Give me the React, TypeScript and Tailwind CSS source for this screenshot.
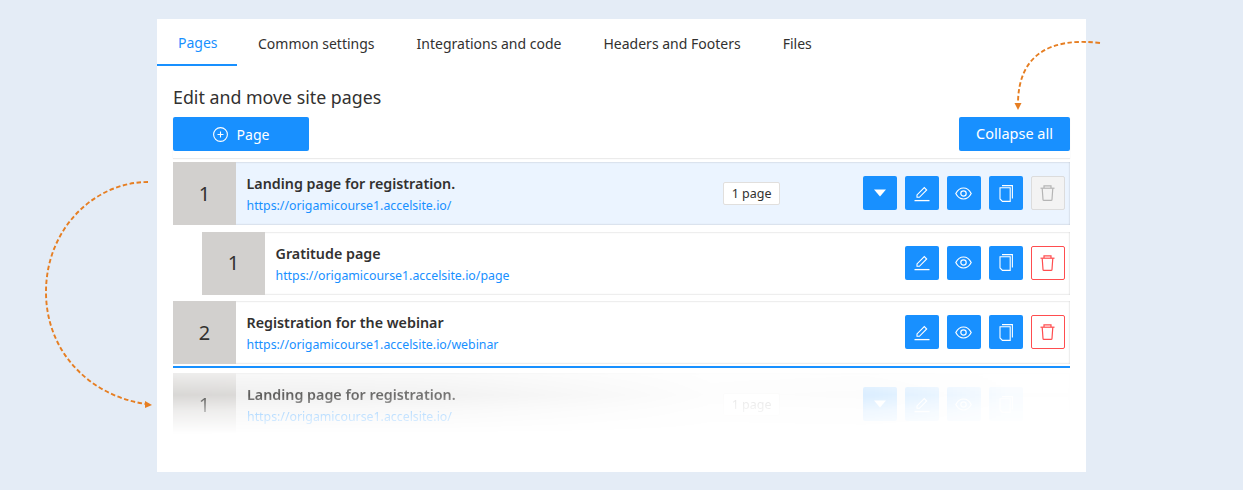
import type { ReactNode } from 'react';

type PageRow = {
  num: number;
  title: string;
  url: string;
  nested?: boolean;
  active?: boolean;
  ghost?: boolean;
};

const tabs = ['Pages', 'Common settings', 'Integrations and code', 'Headers and Footers', 'Files'];

const IconBtn = ({ children, className }: { children: ReactNode; className?: string }) => (
  <button className={`flex h-[34px] w-[33.5px] items-center justify-center rounded-[2px] ${className ?? 'bg-[#1890ff] text-white'}`}>
    {children}
  </button>
);

const CaretIcon = () => (
  <svg width="12" height="8" viewBox="0 0 12 8" fill="currentColor">
    <path d="M0 .5h12L6 7.500z" />
  </svg>
);

const EditIcon = () => (
  <svg width="16" height="17" viewBox="0 0 16 17" fill="none" stroke="currentColor" strokeWidth="1.100">
    <path d="M3 12.300v-2.400L10.300 2.600l2.400 2.400-7.300 7.300z" />
    <path d="M0.500 15.600h15" strokeWidth="1.300" />
  </svg>
);

const EyeIcon = () => (
  <svg width="17" height="13" viewBox="0 0 17 13" fill="none" stroke="currentColor" strokeWidth="1.200">
    <path d="M.8 6.500C2.600 3 5.300 1 8.500 1s5.900 2 7.700 5.500C14.400 10 11.700 12 8.500 12S2.600 10 .8 6.500z" />
    <circle cx="8.500" cy="6.500" r="2.700" />
  </svg>
);

const CopyIcon = () => (
  <svg width="14" height="17" viewBox="0 0 14 17" fill="none" stroke="currentColor" strokeWidth="1.100">
    <path d="M3 .6h10.400v12.800" />
    <path d="M1 2.800h10.200v13.600H3.400L1 14z" />
  </svg>
);

const TrashIcon = () => (
  <svg width="15" height="16" viewBox="0 0 15 16" fill="none" stroke="currentColor" strokeWidth="1.200">
    <path d="M.5 3.200h14" />
    <path d="M4 3V.8h7V3" />
    <path d="M2.200 3.200l.8 11.200c0 .6.400 1 1 1h7c.6 0 1-.4 1-1l.8-11.200" />
  </svg>
);

const rowBg = (row: PageRow) => {
  if (row.ghost) return 'bg-[#ededed]';
  return row.active ? 'bg-[#ebf4ff]' : 'bg-white';
};

const Row = ({ row }: { row: PageRow }) => (
  <div
    className={`flex h-[63px] items-stretch shadow-[inset_0_0_2px_rgba(0,0,0,0.25)] ${row.nested ? 'ml-[29px]' : ''} ${rowBg(row)}`}
  >
    <div className="flex w-[63px] shrink-0 items-center justify-center bg-[#d2d0ce] text-[20px] text-[#323130]">
      {row.num}
    </div>
    <div className={`flex min-w-0 flex-1 flex-col pt-[12px] ${row.ghost ? 'pl-[11px]' : 'pl-[10.5px]'}`}>
      <div className="text-[14.3px] leading-[20px] font-semibold text-[#323130]">{row.title}</div>
      <div className="mt-[3px] text-[12.35px] leading-[18px] text-[#1890ff]">{row.url}</div>
    </div>
    {row.active && (
      <div className="mr-[83px] flex items-center">
        <span className="rounded-[2px] border border-[#e1dfdd] bg-white px-[7.5px] text-[12.5px] leading-[21px] text-[#323130]">1 page</span>
      </div>
    )}
    <div className="flex items-center gap-[8.5px] pr-[5.5px] pb-[1px]">
      {row.active && (
        <IconBtn>
          <CaretIcon />
        </IconBtn>
      )}
      <IconBtn>
        <EditIcon />
      </IconBtn>
      <IconBtn>
        <EyeIcon />
      </IconBtn>
      <IconBtn>
        <CopyIcon />
      </IconBtn>
      {row.ghost ? (
        <div className="w-[33.5px]" />
      ) : row.active ? (
        <IconBtn className="border border-[#dcdcdc] bg-[#f3f3f3] text-[#b5b5b5]">
          <TrashIcon />
        </IconBtn>
      ) : (
        <IconBtn className="border border-[#ff4d4f] bg-white text-[#ff4d4f]">
          <TrashIcon />
        </IconBtn>
      )}
    </div>
  </div>
);

const App = () => {
  return (
    <div className="relative h-[490px] overflow-hidden bg-[#e4ecf6] pt-[19px] font-['Noto_Sans','Open_Sans',sans-serif]">
      <div className="mx-auto h-[453px] w-[929px] bg-white">
        {/* Tabs */}
        <div className="flex h-[47px] text-[14px]">
          {tabs.map((tab, i) => (
            <div
              key={tab}
              className={`flex items-center pt-[2px] ${i === 0 ? 'w-[80px] border-b-[2px] border-[#1890ff] pl-[21px] text-[#1890ff]' : 'px-[21px] text-[#323130]'}`}
            >
              {tab}
            </div>
          ))}
        </div>

        <div className="px-[16px]">
          <h2 className="mt-[18px] text-[17.8px] leading-[26px] text-[#323130]">Edit and move site pages</h2>

          {/* Toolbar */}
          <div className="mt-[7px] flex justify-between pb-[7px] shadow-[0_1px_1px_rgba(0,0,0,0.08)]">
            <button className="flex h-[34px] w-[136px] items-center justify-center gap-[9px] rounded-[2px] bg-[#1890ff] text-[14px] text-white">
              <svg width="15" height="15" viewBox="0 0 15 15" fill="none" stroke="currentColor" strokeWidth="1.100">
                <circle cx="7.500" cy="7.500" r="6.900" />
                <path d="M7.500 4.500v6M4.500 7.500h6" />
              </svg>
              Page
            </button>
            <button className="h-[34px] w-[111px] rounded-[2px] bg-[#1890ff] text-[14.5px] text-white">Collapse all</button>
          </div>

          {/* Page rows */}
          <div className="mt-[4px] flex flex-col gap-[6.5px]">
            <Row row={{ num: 1, title: 'Landing page for registration.', url: 'https://origamicourse1.accelsite.io/', active: true }} />
            <Row row={{ num: 1, title: 'Gratitude page', url: 'https://origamicourse1.accelsite.io/page', nested: true }} />
            <Row row={{ num: 2, title: 'Registration for the webinar', url: 'https://origamicourse1.accelsite.io/webinar' }} />
          </div>
          <div className="mt-[2px] h-[2px] bg-[#1890ff]" />

          {/* Row being dragged, fades out to the bottom and the right */}
          <div className="mt-[5px] [mask-composite:intersect] [mask-image:linear-gradient(to_bottom,rgba(0,0,0,0.45),rgba(0,0,0,1)_35%,rgba(0,0,0,0.45)_60%,transparent_97%),linear-gradient(to_right,rgba(0,0,0,0.85),rgba(0,0,0,0.7)_30%,rgba(0,0,0,0.12)_60%,rgba(0,0,0,0.16)_77%,rgba(0,0,0,0.03)_93%)]">
            <Row row={{ num: 1, title: 'Landing page for registration.', url: 'https://origamicourse1.accelsite.io/', active: true, ghost: true }} />
          </div>
        </div>
      </div>

      {/* Annotation arrows */}
      <svg className="absolute inset-0" width="1243" height="490" fill="none" stroke="#e67e22" strokeWidth="1.900">
        <path d="M148 182C95 182 46 228 46 292C46 352 90 396 146 404" strokeDasharray="4.500 2.500" />
        <path d="M1100 43C1050 37 1018 55 1018 104" strokeDasharray="4.500 2.500" />
        <path d="M152 405l-7-4v7z" fill="#e67e22" stroke="none" />
        <path d="M1018 110l-3.500-7h7z" fill="#e67e22" stroke="none" />
      </svg>
    </div>
  );
};

export default App;
